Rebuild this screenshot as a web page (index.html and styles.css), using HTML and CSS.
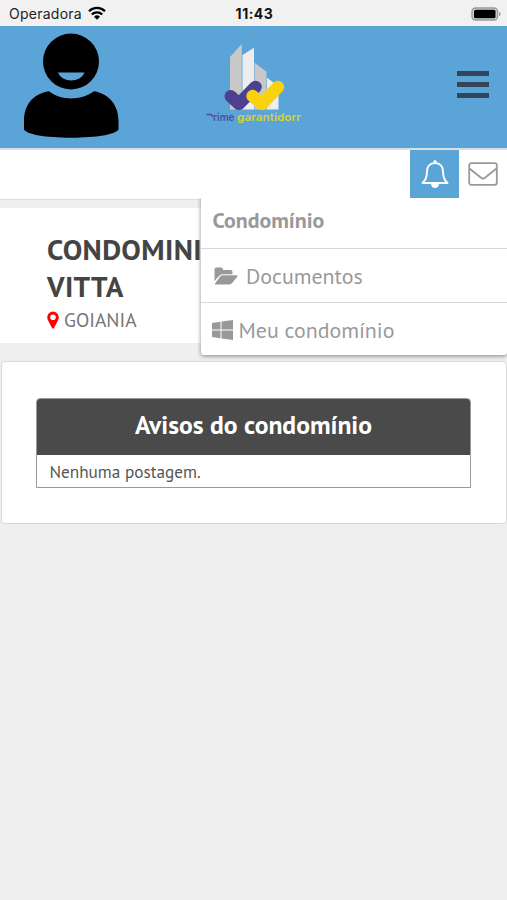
FILE: index.html
```html
<!DOCTYPE html>
<html lang="pt-br">
<head>
<meta charset="UTF-8">
<meta name="viewport" content="width=device-width, initial-scale=1">
<title>Prime Garantidora</title>
<link rel="stylesheet" href="styles.css">
</head>

<body>
	<div class="statusbar">
		<div class="carrier">
			<span>Operadora</span>
			<svg class="wifi" width="18" height="14" viewBox="0 0 18 14">
				<path d="M1 5.2a11.4 11.4 0 0 1 16 0M3.8 8.500a7.4 7.4 0 0 1 10.4 0" fill="none" stroke="#000" stroke-width="2.3"/>
				<path d="M6 10.8a4.3 4.3 0 0 1 6 0L9 13.8z"/>
			</svg>
		</div>
		<div class="clock">11:43</div>
		<div class="battery">
			<svg width="31" height="14" viewBox="0 0 31 14">
				<rect x="1" y="1" width="25.500" height="12" rx="3.500" fill="#d6d6d6" stroke="#999" stroke-width="1.4"/>
				<rect x="3" y="2.700" width="21.500" height="8.600" rx="1.500"/>
				<path d="M28 4.700q3.400 2.300 0 4.600z" fill="#999"/>
			</svg>
		</div>
	</div>

	<header class="topo">
		<svg class="avatar" width="96" height="106" viewBox="0 0 96 106">
			<path fill-rule="evenodd" d="M48 .500a28 28 0 1 1 0 56a28 28 0 1 1 0-56zM35 39.500c4 10.500 22.500 10.500 26.500 0z"/>
			<path d="M26 58.300c13 9.600 31 9.600 45 0C87 61 95.500 73 95.500 88v8.500c-3 5-22 8.200-47.500 8.200S4 101.500 1 96.500V88C1 73 9 61 26 58.300z"/>
		</svg>

		<svg class="logo" width="98" height="84" viewBox="0 0 98 84">
			<path d="M25 14L36.800 1v65.500H25z" fill="#c8c8c8"/>
			<path d="M37.500 12L49 4.700v61.800H37.500z" fill="#ededed"/>
			<path d="M49.500 19.700l12 9V66.500h-12z" fill="#c8c8c8"/>
			<path d="M62 34.700l11.500 8.500v23.300H62z" fill="#eee"/>
			<path d="M25.800 53.300l8.200 7.500L50.500 44" class="check roxo"/>
			<path d="M47.600 53l9.400 8L73 44" class="check amarelo"/>
			<path d="M1.500 71.500h4q2 0 2 2.500" class="traco"/>
			<text x="8" y="77.500" textLength="21.500" lengthAdjust="spacingAndGlyphs" class="nome-roxo">rime</text>
			<text x="32" y="77.500" textLength="64" lengthAdjust="spacingAndGlyphs" class="nome-amarelo">garantidorr</text>
		</svg>

		<button class="btn-menu" type="button" aria-label="Menu">
			<span></span>
			<span></span>
			<span></span>
		</button>
	</header>

	<nav class="barra">
		<a href="#" class="item ativo" aria-label="Avisos">
			<svg width="28" height="30" viewBox="0 0 28 30">
				<path d="M14 4c-5 0-8 3.500-8 8.500C6 18 4.500 21.500 1.500 24h25c-3-2.500-4.500-6-4.500-11.500C22 7.500 19 4 14 4z" fill="none" stroke="#fff" stroke-width="1.900" stroke-linejoin="round"/>
				<path d="M12.500 3.500V2q1.500-1.800 3 0v1.500zM10 25h8q-.500 4-4 4t-4-4z" fill="#fff"/>
			</svg>
		</a>
		<a href="#" class="item" aria-label="Mensagens">
			<svg width="30" height="24" viewBox="0 0 30 24">
				<rect x="1.200" y="1.200" width="27.600" height="21.600" rx="2" fill="none" stroke="#999" stroke-width="1.800"/>
				<path d="M1.500 6.500L13 15.800q2 1.500 4 0L28.500 6.500" fill="none" stroke="#999" stroke-width="1.800"/>
			</svg>
		</a>

		<div class="dropdown">
			<div class="titulo">Condomínio</div>
			<a href="#" class="opcao">
				<svg class="ic-pasta" width="24" height="18" viewBox="0 0 24 18">
					<path d="M.500 14V2.500Q.500.500 2.500.500H7Q9 .500 9 2.500V3h7.500q2 0 2 2v2.300H8.500Q6.500 7.300 5 9z"/>
					<path d="M8.500 8.300H23q1.200 0 .400 1.200l-5 6.300q-1.200 1.700-3 1.700H2q-1.800 0-.800-1.300l4.600-6.300q1-1.600 2.700-1.600z"/>
				</svg>
				<span>Documentos</span>
			</a>
			<a href="#" class="opcao">
				<svg class="ic-windows" width="21" height="20" viewBox="0 0 21 20">
					<path d="M0 3l8.500-1.200v7.700H0zM9.500 1.600L21 0v9.500H9.500zM0 10.500h8.500v7.700L0 17zM9.500 10.500H21V20L9.500 18.400z"/>
				</svg>
				<span>Meu condomínio</span>
			</a>
		</div>
	</nav>

	<section class="condominio">
		<h1>CONDOMINIO<br>VITTA</h1>
		<div class="cidade">
			<svg width="12" height="18" viewBox="0 0 12 18">
				<path fill="#f00" fill-rule="evenodd" d="M6 .500a5.700 5.700 0 0 1 5.700 5.700c0 1.500-.300 2.300-.800 3.300L7 17q-1 1.500-2 0L1.100 9.500C.600 8.500.300 7.700.300 6.200A5.700 5.700 0 0 1 6 .500zM6 3.400a2.800 2.800 0 1 0 0 5.600a2.800 2.800 0 1 0 0-5.600z"/>
			</svg>
			<span>GOIANIA</span>
		</div>
	</section>

	<section class="card">
		<div class="avisos">
			<h2>Avisos do condomínio</h2>
			<p>Nenhuma postagem.</p>
		</div>
	</section>
</body>
</html>
```

FILE: styles.css
```css
* {
	box-sizing: border-box;
}

body {
	margin: 0;
	background: #efefef;
	color: #444;
	font-family: "PT Sans", "Noto Sans CJK SC", "Noto Sans", sans-serif;
}

a {
	color: inherit;
	text-decoration: none;
}

svg {
	display: block;
	flex: none;
}

/* barra de status */
.statusbar {
	display: grid;
	grid-template-columns: 1fr auto 1fr;
	align-items: center;
	height: 26px;
	padding: 0 7px 0 9px;
	background: #f1f1f1;
	color: #222;
	font-family: Inter, sans-serif;
	font-size: 14px;
	line-height: 27px;
}

.carrier {
	display: flex;
	align-items: center;
	gap: 6px;
	letter-spacing: 0.25px;
}

.wifi {
	margin-top: -2px;
}

.clock {
	font-weight: 700;
	letter-spacing: 0.5px;
	color: #111;
}

.battery {
	justify-self: end;
	margin-right: -2px;
}

/* topo */
.topo {
	display: flex;
	align-items: flex-start;
	height: 122px;
	padding: 7px 18px 0 23px;
	background: #5ba4d8;
}

.logo {
	margin: 10px 0 0 86px;
}

.check {
	fill: none;
	stroke-width: 12.5px;
	stroke-linecap: round;
	stroke-linejoin: round;
}

.roxo {
	stroke: #4d3f91;
}

.amarelo {
	stroke: #f8d20c;
}

.traco {
	fill: none;
	stroke: #4d4f9f;
	stroke-width: 1.3px;
}

.nome-roxo,
.nome-amarelo {
	font-family: Inter, sans-serif;
	font-size: 11px;
	font-weight: 600;
	fill: #4d4f9f;
}

.nome-amarelo {
	fill: #d8d036;
}

.btn-menu {
	display: flex;
	flex-direction: column;
	gap: 5.5px;
	margin: 38px 0 0 auto;
	padding: 0;
	border: 0;
	background: none;
}

.btn-menu span {
	width: 32px;
	height: 5.3px;
	background: #30475a;
}

/* barra de icones */
.barra {
	position: relative;
	display: flex;
	justify-content: flex-end;
	height: 52px;
	border-top: 2px solid #d9dfe3;
	border-bottom: 1px solid #ddd;
	background: #fff;
}

.item {
	display: flex;
	align-items: center;
	justify-content: center;
	width: 48px;
	height: 48px;
}

.ativo {
	width: 49px;
	background: #5ba4d8;
}

.dropdown {
	position: absolute;
	top: 48px;
	right: 0;
	width: 306px;
	height: 157px;
	border-radius: 0 0 3px 3px;
	background: #fff;
	box-shadow: 0 1px 4px rgba(0, 0, 0, 0.45);
	clip-path: inset(0 0 -8px -8px);
	color: #999;
	font-size: 21.9px;
}

.titulo {
	height: 51px;
	padding-left: 11.5px;
	border-bottom: 1px solid #d8d8d8;
	font-weight: 700;
	line-height: 45px;
}

.opcao {
	display: flex;
	align-items: center;
	height: 53px;
	padding-left: 11px;
	line-height: 54px;
}

.opcao + .opcao {
	height: 54px;
	border-top: 1px solid #d8d8d8;
}

.opcao svg {
	fill: #999;
}

.ic-pasta {
	margin: 0 8px 0 2px;
}

.ic-windows {
	margin-right: 5.5px;
}

/* dados do condominio */
.condominio {
	height: 135px;
	margin-top: 8px;
	padding: 23px 47px 0;
	background: #fff;
}

h1 {
	margin: 0;
	font-size: 29.2px;
	line-height: 37px;
	letter-spacing: 0.35px;
	white-space: nowrap;
}

.cidade {
	display: flex;
	align-items: center;
	gap: 5px;
	height: 30px;
	color: #777;
	font-size: 19.5px;
	line-height: 30px;
}

/* avisos */
.card {
	height: 163px;
	margin: 18px 0 0 1px;
	padding: 36px 35px 0 34px;
	border: 1px solid #d9d9d9;
	border-radius: 4px;
	background: #fff;
}

.avisos {
	height: 90px;
	border: 1px solid #999;
	border-radius: 4px 4px 0 0;
}

h2 {
	height: 56px;
	margin: 0;
	border-radius: 3px 3px 0 0;
	background: #4a4a4a;
	color: #fff;
	font-size: 25.6px;
	line-height: 52px;
	text-align: center;
}

.avisos p {
	margin: 0;
	padding-left: 12.5px;
	color: #555;
	font-size: 17.2px;
	line-height: 33px;
}
```
